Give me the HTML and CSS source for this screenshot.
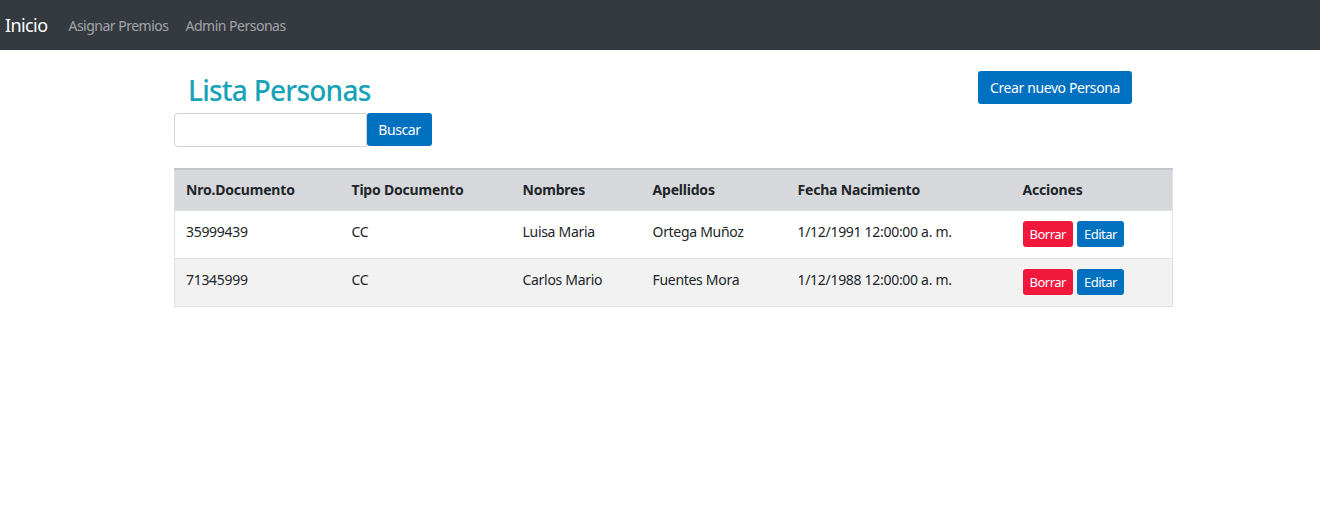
FILE: index.html
```html
<!DOCTYPE html>
<html lang="es">
<head>
<meta charset="utf-8">
<title>Lista Personas</title>
<link rel="stylesheet" href="styles.css">
</head>
<body>
<nav class="navbar">
  <a class="brand" href="#">Inicio</a>
  <a class="nav-link" href="#">Asignar Premios</a>
  <a class="nav-link" href="#">Admin Personas</a>
</nav>
<main class="container">
  <div class="top">
    <div class="left">
      <h1 class="title">Lista Personas</h1>
      <form class="search">
        <input class="search-input" type="text">
        <button class="btn btn-blue btn-search" type="button">Buscar</button>
      </form>
    </div>
    <button class="btn btn-blue btn-create" type="button">Crear nuevo Persona</button>
  </div>
  <table class="table">
    <colgroup>
      <col class="c1"><col class="c2"><col class="c3"><col class="c4"><col class="c5"><col class="c6">
    </colgroup>
    <thead>
      <tr>
        <th>Nro.Documento</th>
        <th>Tipo Documento</th>
        <th>Nombres</th>
        <th>Apellidos</th>
        <th>Fecha Nacimiento</th>
        <th>Acciones</th>
      </tr>
    </thead>
    <tbody>
      <tr>
        <td>35999439</td>
        <td>CC</td>
        <td>Luisa Maria</td>
        <td>Ortega Muñoz</td>
        <td>1/12/1991 12:00:00 a. m.</td>
        <td class="actions"><button class="btn btn-sm btn-red" type="button">Borrar</button><button class="btn btn-sm btn-blue" type="button">Editar</button></td>
      </tr>
      <tr class="alt">
        <td>71345999</td>
        <td>CC</td>
        <td>Carlos Mario</td>
        <td>Fuentes Mora</td>
        <td>1/12/1988 12:00:00 a. m.</td>
        <td class="actions"><button class="btn btn-sm btn-red" type="button">Borrar</button><button class="btn btn-sm btn-blue" type="button">Editar</button></td>
      </tr>
    </tbody>
  </table>
</main>
</body>
</html>
```
FILE: styles.css
```css
* { box-sizing: border-box; }
body {
  margin: 0;
  font-family: "Noto Sans", "Open Sans", sans-serif;
  color: #212529;
  background: #fff;
  font-size: 14px;
}
.navbar {
  height: 50px;
  background: #343a40;
  display: flex;
  align-items: center;
  padding: 0 5px;
}
.brand {
  color: #fff;
  text-decoration: none;
  font-size: 18px;
  margin-right: 21px;
  letter-spacing: -0.6px;
}
.nav-link {
  color: rgba(255,255,255,0.55);
  text-decoration: none;
  font-size: 14px;
  margin-right: 17px;
  letter-spacing: -0.5px;
}
.container {
  width: 998px;
  margin: 0 0 0 174px;
}
.top {
  display: flex;
  justify-content: space-between;
  align-items: flex-start;
  padding-top: 21px;
}
.title {
  margin: 0 0 4px 14px;
  font-size: 28px;
  font-weight: 500;
  line-height: 38px;
  color: #17a2b8;
  letter-spacing: -0.75px;
}
.search {
  display: flex;
  margin: 0;
}
.search-input {
  width: 193px;
  height: 34px;
  border: 1px solid #ced4da;
  border-radius: 4px 0 0 4px;
  padding: 4px 8px;
  font: inherit;
}
.btn {
  font-family: inherit;
  border: none;
  color: #fff;
  cursor: pointer;
  border-radius: 3px;
}
.btn-blue { background: #0070c0; }
.btn-red { background: #f0183d; }
.btn-search {
  width: 65px;
  height: 33px;
  font-size: 14px;
  padding: 0;
  letter-spacing: -0.4px;
}
.btn-create {
  margin-right: 40px;
  width: 154px;
  height: 33px;
  font-size: 14px;
  padding: 0;
  letter-spacing: -0.4px;
}
.table {
  margin-top: 21px;
  width: 998px;
  border-collapse: collapse;
  table-layout: fixed;
  border: 1px solid #dee2e6;
}
.c1 { width: 166px; }
.c2 { width: 171px; }
.c3 { width: 130px; }
.c4 { width: 145px; }
.c5 { width: 225px; }
.c6 { width: 161px; }
thead tr {
  background: #d6d8db;
  border-top: 2px solid #c1c4c8;
}
th {
  text-align: left;
  font-weight: 700;
  font-size: 14px;
  height: 41px;
  padding: 0 11px;
  letter-spacing: -0.2px;
}
td {
  height: 48px;
  padding: 0 11px 5px;
  font-size: 14px;
  vertical-align: middle;
  border-top: 1px solid #dee2e6;
  letter-spacing: -0.3px;
}
tr.alt td { background: #f2f2f2; }
td.actions { padding-top: 0; padding-bottom: 0; }
.btn-sm {
  height: 26px;
  font-size: 13px;
  padding: 0 7px;
  margin-right: 4px;
  letter-spacing: -0.5px;
}
```
